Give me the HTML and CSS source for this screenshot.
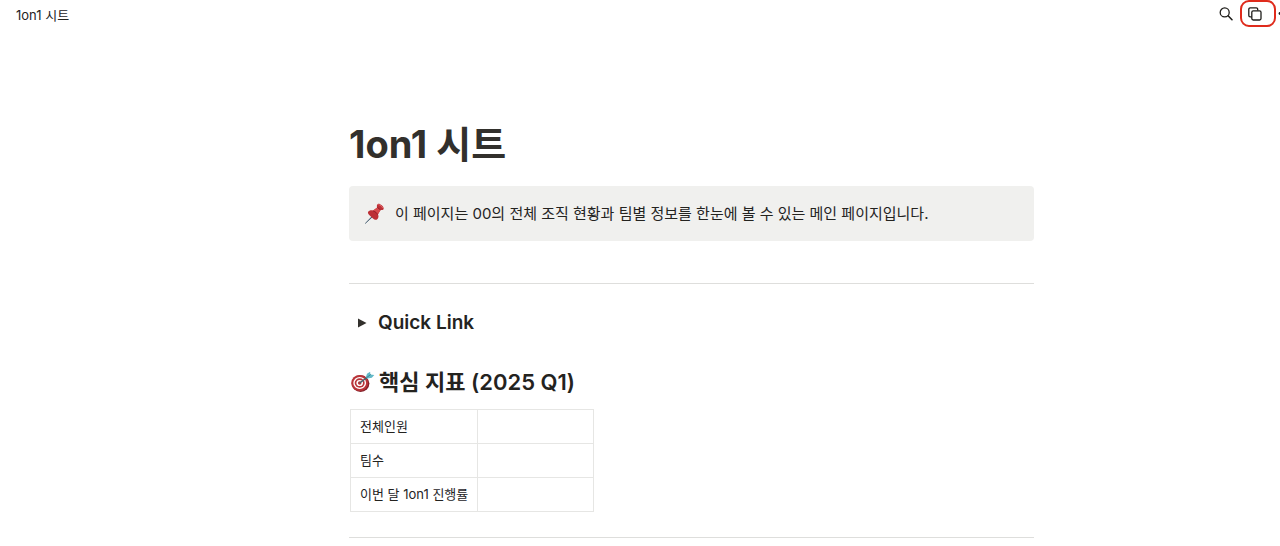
FILE: index.html
```html
<!DOCTYPE html>
<html lang="ko">
<head>
<meta charset="utf-8">
<title>1on1 시트</title>
<link rel="stylesheet" href="styles.css">
</head>
<body>
<header class="topbar">
  <a class="crumb" href="#">1on1 시트</a>
  <div class="actions">
    <button class="icon-btn" type="button" aria-label="검색">
      <svg width="16" height="16" viewBox="0 0 16 16" fill="none" stroke="#1f1e1b" stroke-width="1.3" stroke-linecap="round"><circle cx="6.700" cy="6.400" r="4.500"/><path d="M10.100 9.800l3.900 3.900" stroke-width="1.600"/></svg>
    </button>
    <button class="icon-btn marked" type="button" aria-label="복제">
      <svg width="16" height="16" viewBox="0 0 16 16" fill="none" stroke="#1f1e1b" stroke-width="1.3" stroke-linejoin="round"><rect x="4.800" y="4.800" width="9.200" height="9.200" rx="1.400"/><path d="M4.600 10.800H3.200a1.400 1.400 0 0 1-1.400-1.400V3.200a1.400 1.400 0 0 1 1.400-1.400h6.100a1.400 1.400 0 0 1 1.400 1.400v1.400"/></svg>
    </button>
    <button class="more" type="button" aria-label="더 보기">
      <svg width="4" height="16" viewBox="0 0 4 16"><circle cx="4" cy="7.500" r="1.400" fill="#1f1e1b"/></svg>
    </button>
  </div>
</header>
<main class="page">
  <h1 class="title">1on1 시트</h1>
  <aside class="callout">
    <svg class="pin" width="22" height="22" viewBox="0 0 22 22" aria-hidden="true">
      <path d="M1.200 20.500L8 12.500l1.300 1.200z" fill="#9aa9b5"/><path d="M1.200 20.500l7.600-7.300" stroke="#40586b" stroke-width=".9"/>
      <path d="M3.900 9.300c1-1.800 3.100-2.300 5.200-1.800l4.100-3.100c-.7-1.500-.3-3 .7-3.500 1.800-.7 5.700 2.400 5.800 4.500 0 1.400-1.700 2-3 1.400l-2.700 4.500c1 2.300.5 4.200-1.400 5.400-1.400.5-3-.7-4.700-2.300C5.600 12.800 3.700 11 3.900 9.300z" fill="#bd3036"/>
      <path d="M9.100 7.500l4.100-3.100 3.500 2.400-2.700 4.500c-1.200-1.800-2.700-3.100-4.900-3.800z" fill="#d84b4c"/>
      <path d="M9.300 8c2.100.7 3.500 1.900 4.200 3.600M13.400 4.100c.8 1.400 1.900 2.300 3.300 2.700" fill="none" stroke="#8f1c27" stroke-width=".9"/>
      <path d="M14.700 1.700c1.300.1 3.300 1.600 3.800 2.900" fill="none" stroke="#e56a6b" stroke-width="1" stroke-linecap="round"/>
    </svg>
    <p class="callout-text">이 페이지는 00의 전체 조직 현황과 팀별 정보를 한눈에 볼 수 있는 메인 페이지입니다.</p>
  </aside>
  <hr class="rule">
  <details class="toggle">
    <summary class="toggle-head">
      <svg class="arrow" width="10" height="10" viewBox="0 0 10 10" aria-hidden="true"><path d="M1 .5l8.500 4.500L1 9.500z" fill="#32302c"/></svg>
      <span>Quick Link</span>
    </summary>
  </details>
  <h2 class="section">
    <svg class="target" width="26" height="22" viewBox="0 0 26 22" aria-hidden="true">
      <ellipse cx="11.600" cy="12.600" rx="8.800" ry="8.300" fill="#81212a"/>
      <ellipse cx="10.700" cy="12" rx="8.500" ry="8.100" fill="#b93439"/>
      <ellipse cx="10.700" cy="12" rx="6.400" ry="6" fill="#fff"/>
      <ellipse cx="10.700" cy="12" rx="5" ry="4.700" fill="#b93439"/>
      <ellipse cx="10.700" cy="12" rx="3.300" ry="3.100" fill="#fff"/>
      <ellipse cx="10.700" cy="12" rx="1.800" ry="1.700" fill="#b93439"/>
      <path d="M10.700 12l8.500-6.500" stroke="#3f6670" stroke-width="1.500"/>
      <path d="M16.800 6.300l1.200-3.500L21.100.7l.3 2.800 3.900.4-2.500 2.900-4.400.7z" fill="#63b9c8"/>
      <path d="M17.500 6.700l4.300-3.300" stroke="#347f90" stroke-width=".9"/>
    </svg>
    <span>핵심 지표 (2025 Q1)</span>
  </h2>
  <table class="metrics">
    <tbody>
      <tr><th scope="row">전체인원</th><td></td></tr>
      <tr><th scope="row">팀수</th><td></td></tr>
      <tr><th scope="row">이번 달 1on1 진행률</th><td></td></tr>
    </tbody>
  </table>
  <hr class="rule rule-end">
</main>
</body>
</html>
```
FILE: styles.css
```css
* { box-sizing: border-box; }
body {
  margin: 0;
  overflow-x: hidden;
  background: #fff;
  color: #24231f;
  font-family: Inter, "Noto Sans CJK KR", sans-serif;
}
.topbar {
  display: flex;
  justify-content: space-between;
  align-items: flex-start;
  padding-left: 16px;
}
.crumb {
  padding-top: 5px;
  color: #24231f;
  font-size: 13px;
  line-height: 20px;
  text-decoration: none;
}
.actions { display: flex; align-items: flex-start; }
button { border: 0; padding: 0; background: none; }
.icon-btn {
  display: flex;
  justify-content: center;
  align-items: center;
  width: 28px;
  height: 27px;
}
.marked {
  width: 36px;
  padding: 0 6px 0 0;
  border: 2px solid #df2b1c;
  border-radius: 9px;
}
.more { display: flex; align-items: center; height: 27px; }
.page { padding: 93px 246px 8px 349px; }
.title {
  margin: 0;
  color: #32302c;
  font-size: 38px;
  line-height: 48px;
  font-weight: 700;
}
.callout {
  display: flex;
  align-items: center;
  gap: 9px;
  min-height: 55px;
  margin-top: 18px;
  padding: 8px 15px;
  border-radius: 4px;
  background: #f0f0ee;
}
.pin { flex: none; }
.callout-text {
  margin: 0;
  font-size: 15px;
  line-height: 24px;
}
.rule {
  height: 1px;
  margin: 42px 0 0;
  border: 0;
  background: #dededc;
}
.toggle { margin-top: 23px; }
.toggle-head {
  display: flex;
  align-items: center;
  gap: 11px;
  padding-left: 8px;
  font-size: 19px;
  line-height: 32px;
  font-weight: 600;
  list-style: none;
}
.section {
  display: flex;
  align-items: center;
  gap: 4px;
  margin: 27px 0 0;
  font-size: 22px;
  line-height: 32px;
  font-weight: 600;
}
.metrics {
  margin: 11px 0 0 1px;
  border-collapse: collapse;
  font-size: 13px;
  line-height: 20px;
}
.metrics th, .metrics td {
  height: 34px;
  padding: 5px 9px 7px;
  border: 1px solid #e6e6e4;
  font-weight: 400;
  text-align: left;
}
.metrics td { width: 116px; }
.rule-end { margin-top: 25px; }
```
